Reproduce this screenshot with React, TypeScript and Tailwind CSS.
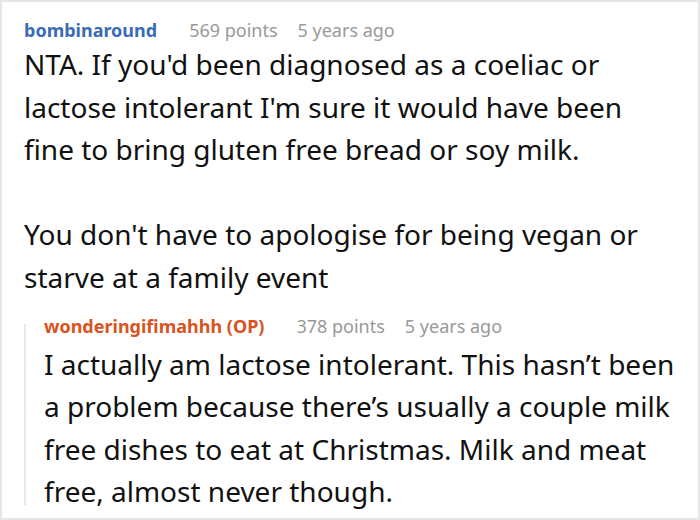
const FONT = { fontFamily: '"Noto Sans", "Open Sans", sans-serif' }

function Meta({ user, color, points }: { user: string; color: string; points: string }) {
  return (
    <div className="flex items-baseline h-[26px] text-[18px] leading-[26px] whitespace-nowrap">
      <span className={`font-bold ${color}`}>{user}</span>
      <span className="ml-[32px] text-[#999999]">{points}</span>
      <span className="ml-[20px] text-[#999999]">5 years ago</span>
    </div>
  )
}

export default function App() {
  return (
    <div style={FONT} className="w-[700px] h-[520px] bg-white border-2 border-[#e6e6e6] box-border overflow-hidden">
      <div className="pl-[22px] pt-[15px]">
        <Meta user="bombinaround" color="text-[#3a6bb5]" points="569 points" />
        <div className="text-[28px] leading-[42.6px] text-[#111111] whitespace-nowrap">
          <p>
            NTA. If you'd been diagnosed as a coeliac or
            <br />
            lactose intolerant I'm sure it would have been
            <br />
            fine to bring gluten free bread or soy milk.
          </p>
          <p className="mt-[42.6px]">
            You don't have to apologise for being vegan or
            <br />
            starve at a family event
          </p>
        </div>
        <div className="mt-[14px] flex">
          <div className="w-[2px] bg-[#e8e8e8] mt-[11px] mb-[8px]" />
          <div className="pl-[18px]">
            <Meta user="wonderingifimahhh (OP)" color="text-[#d9531e]" points="378 points" />
            <p className="mt-[4px] text-[28px] leading-[42.6px] text-[#111111] whitespace-nowrap">
              I actually am lactose intolerant. This hasn’t been
              <br />
              a problem because there’s usually a couple milk
              <br />
              free dishes to eat at Christmas. Milk and meat
              <br />
              free, almost never though.
            </p>
          </div>
        </div>
      </div>
    </div>
  )
}
